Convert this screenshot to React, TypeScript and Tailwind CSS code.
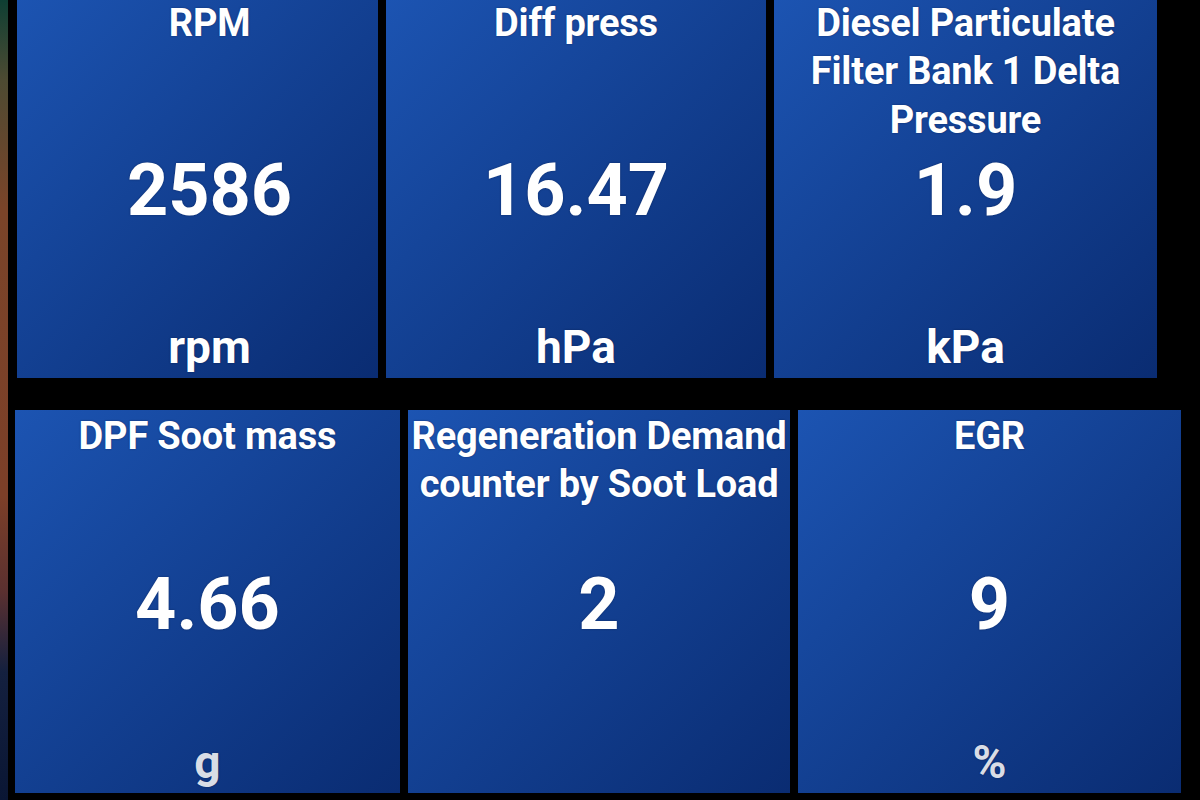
import { FC } from 'react'

type Gauge = {
	title: string[]
	value: string
	unit: string
	width: string
	shift?: string
	unitTone?: string
}

const topRow: Gauge[] = [
	{ title: ['RPM'], value: '2586', unit: 'rpm', width: 'w-[361px]', shift: 'pl-[24px]' },
	{ title: ['Diff press'], value: '16.47', unit: 'hPa', width: 'w-[380px]' },
	{ title: ['Diesel Particulate', 'Filter Bank 1 Delta', 'Pressure'], value: '1.9', unit: 'kPa', width: 'w-[383px]' },
]

const bottomRow: Gauge[] = [
	{ title: ['DPF Soot mass'], value: '4.66', unit: 'g', width: 'w-[385px]', unitTone: 'text-[#d9dde6]' },
	{ title: ['Regeneration Demand', 'counter by Soot Load'], value: '2', unit: '', width: 'w-[382px]' },
	{ title: ['EGR'], value: '9', unit: '%', width: 'w-[383px]', unitTone: 'text-[#d9dde6]' },
]

const Tile: FC<{ g: Gauge }> = ({ g }) => (
	<div
		className={`${g.width} ${g.shift ?? ''} h-full grid grid-rows-[1fr_auto_1fr] justify-items-center bg-linear-to-br from-[#1c54b2] to-[#0a2c72] text-white font-bold [text-shadow:0_0_2px_rgba(0,10,40,0.45)]`}
	>
		<div className="self-start pt-0.5 text-[38px] leading-[1.27] text-center tracking-[-0.2px]">
			{g.title.map((line) => (
				<div key={line} className="whitespace-nowrap">
					{line}
				</div>
			))}
		</div>
		<div className="text-[72px] leading-none pt-1.5">{g.value}</div>
		<div className={`self-end pb-2 text-[46px] leading-none ${g.unitTone ?? 'text-white'}`}>{g.unit}</div>
	</div>
)

const App: FC = () => {
	return (
		<div className="w-[1200px] h-[800px] bg-black flex overflow-hidden font-['Roboto','Liberation_Sans',sans-serif]">
			{/* edge of the app behind, peeking in on the left */}
			<div className="w-2 h-full bg-[linear-gradient(to_bottom,#0e3f33_0%,#4d4a32_10%,#7a4429_26%,#7c3f28_62%,#5a3030_74%,#14203f_84%,#0a1634_100%)]" />

			<div className="flex-1 flex flex-col">
				<div className="h-[381px] -mt-[3px] flex gap-[8px] pl-[9px]">
					{topRow.map((g) => (
						<Tile key={g.value} g={g} />
					))}
				</div>
				<div className="h-[32px]" />
				<div className="h-[383px] flex gap-[8px] pl-[7px]">
					{bottomRow.map((g) => (
						<Tile key={g.value} g={g} />
					))}
				</div>
			</div>
		</div>
	)
}

export default App
